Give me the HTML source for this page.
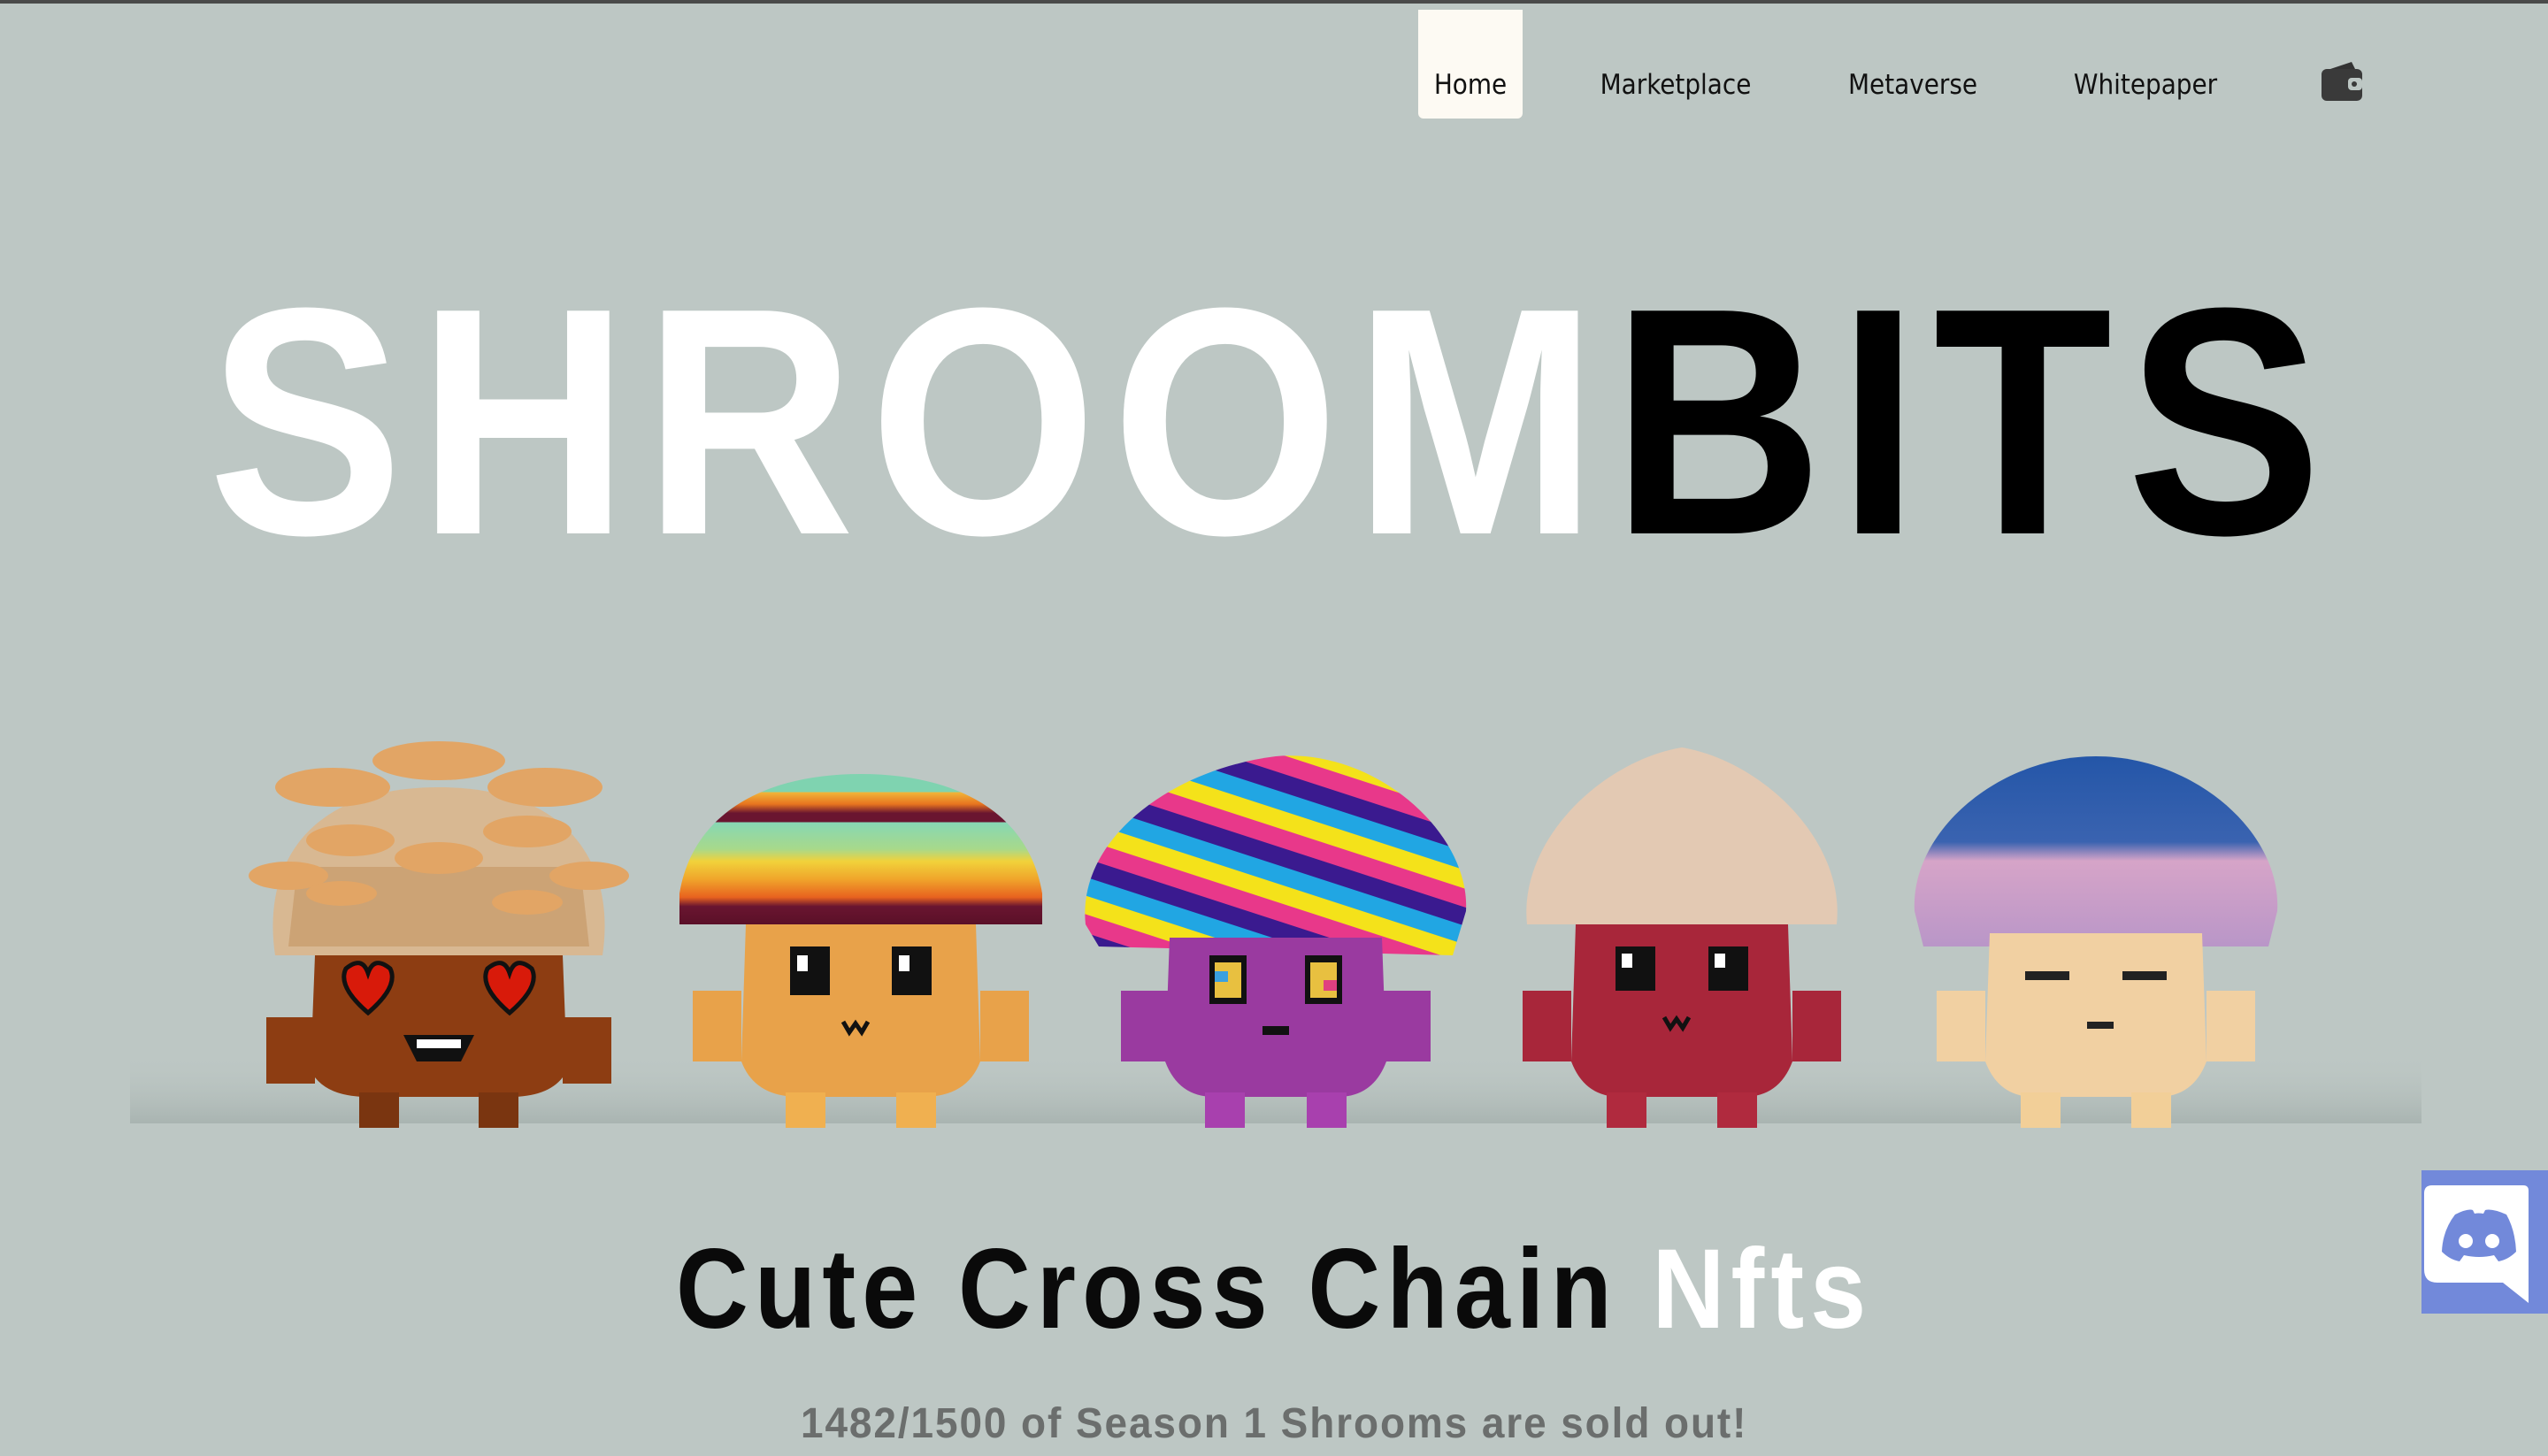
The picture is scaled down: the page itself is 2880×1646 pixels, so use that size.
<!DOCTYPE html>
<html><head><meta charset="utf-8">
<style>
html,body{margin:0;padding:0}
body{width:2880px;height:1646px;overflow:hidden;background:#bdc7c4;position:relative;font-family:"Liberation Sans",sans-serif}
.topbar{position:absolute;left:0;top:0;width:2880px;height:4px;background:#4a4a4a}
.nav{position:absolute;top:0;left:0;width:2880px;height:140px}
.nav a{position:absolute;top:78px;font-size:31px;color:#111;text-decoration:none;transform:translateX(-50%);white-space:nowrap;font-family:"DejaVu Sans Condensed","Liberation Sans Narrow","Liberation Sans",sans-serif}
.home{position:absolute;left:1603px;top:11px;width:118px;height:123px;background:#fdfaf3;border-radius:0 0 6px 6px}
.title{position:absolute;left:235px;top:294px;font-weight:bold;font-size:366px;line-height:366px;letter-spacing:18px;transform-origin:0 0;white-space:nowrap}
.sub{position:absolute;left:764px;top:1388px;font-weight:bold;font-size:128px;line-height:140px;letter-spacing:8px;white-space:nowrap;color:#0a0a0a;transform-origin:0 0}
.sold{position:absolute;left:905px;top:1580px;font-weight:bold;font-size:48px;line-height:60px;color:#6b6e6d;letter-spacing:2px;white-space:nowrap;transform-origin:0 0}
.discord{position:absolute;left:2737px;top:1323px;width:143px;height:162px;background:#7289da}
</style></head><body>
<div class="topbar"></div>
<div class="home"></div>
<div class="nav">
<a style="left:1662px">Home</a>
<a style="left:1894px">Marketplace</a>
<a style="left:2162px">Metaverse</a>
<a style="left:2425px">Whitepaper</a>
</div>
<svg style="position:absolute;left:2622px;top:68px" width="52" height="48" viewBox="0 0 52 48">
<path d="M6 12 L36 2 L40 10 Z" fill="#333"/>
<rect x="2" y="10" width="46" height="36" rx="6" fill="#3a3a3a"/>
<rect x="32" y="20" width="16" height="14" rx="4" fill="#bdc7c4"/>
<circle cx="39" cy="27" r="3" fill="#3a3a3a"/>
</svg>

<div class="title" id="t"><span style="color:#fff">SHROOM</span><span style="color:#000">BITS</span></div>

<svg style="position:absolute;left:0;top:780px" width="2880" height="520" viewBox="0 780 2880 520">
<defs>
<linearGradient id="shadow" x1="0" y1="0" x2="0" y2="1"><stop offset="0" stop-color="#bdc7c4" stop-opacity="0"/><stop offset="1" stop-color="#a9b4b1"/></linearGradient>
<linearGradient id="rain" x1="0" y1="0" x2="0" y2="1">
<stop offset="0" stop-color="#7fd3b0"/><stop offset=".12" stop-color="#7fd3b0"/><stop offset=".12" stop-color="#f1b73a"/><stop offset=".2" stop-color="#e8751f"/><stop offset=".26" stop-color="#6a1530"/><stop offset=".32" stop-color="#6a1530"/><stop offset=".32" stop-color="#86d7b5"/><stop offset=".5" stop-color="#a8d98a"/><stop offset=".58" stop-color="#f1d23b"/><stop offset=".7" stop-color="#f0a52b"/><stop offset=".82" stop-color="#e8621f"/><stop offset=".88" stop-color="#6a1530"/><stop offset="1" stop-color="#5a1028"/></linearGradient>
<pattern id="psyp" width="120" height="80" patternUnits="userSpaceOnUse" patternTransform="rotate(18)">
<rect width="120" height="20" fill="#f4e21a"/><rect y="20" width="120" height="20" fill="#e8388a"/><rect y="40" width="120" height="20" fill="#3a1a8f"/><rect y="60" width="120" height="20" fill="#21a6e3"/></pattern>
<linearGradient id="sky" x1="0" y1="0" x2="0" y2="1"><stop offset="0" stop-color="#2456a8"/><stop offset=".45" stop-color="#3a63b0"/><stop offset=".55" stop-color="#d6a4c8"/><stop offset="1" stop-color="#b996c8"/></linearGradient>
</defs>
<rect x="147" y="1190" width="2590" height="80" fill="url(#shadow)"/>

<g transform="translate(496,830)">
<path d="M-185,250 C-200,150 -150,60 0,60 C150,60 200,150 185,250 Z" fill="#d8b892"/>
<path d="M-170,240 L170,240 L160,150 L-160,150 Z" fill="#c89a6a" opacity=".7"/>
<g fill="#e2a565"><ellipse cx="-120" cy="60" rx="65" ry="22"/><ellipse cx="0" cy="30" rx="75" ry="22"/><ellipse cx="120" cy="60" rx="65" ry="22"/><ellipse cx="-100" cy="120" rx="50" ry="18"/><ellipse cx="100" cy="110" rx="50" ry="18"/><ellipse cx="-170" cy="160" rx="45" ry="16"/><ellipse cx="170" cy="160" rx="45" ry="16"/><ellipse cx="0" cy="140" rx="50" ry="18"/><ellipse cx="-110" cy="180" rx="40" ry="14"/><ellipse cx="100" cy="190" rx="40" ry="14"/></g>
<path d="M-140,250 L140,250 L145,380 Q130,410 80,410 L-80,410 Q-130,410 -145,380 Z" fill="#8d3d12"/>
<rect x="-195" y="320" width="55" height="75" fill="#8d3d12"/><rect x="140" y="320" width="55" height="75" fill="#8d3d12"/>
<rect x="-90" y="405" width="45" height="40" fill="#7a3510"/><rect x="45" y="405" width="45" height="40" fill="#7a3510"/>
<path d="M-105,265 q18,-15 25,5 q7,-20 25,-5 q10,20 -25,50 q-35,-30 -25,-50Z" fill="#d81a0a" stroke="#111" stroke-width="5"/>
<path d="M55,265 q18,-15 25,5 q7,-20 25,-5 q10,20 -25,50 q-35,-30 -25,-50Z" fill="#d81a0a" stroke="#111" stroke-width="5"/>
<path d="M-40,340 L40,340 L25,370 L-25,370 Z" fill="#111"/><rect x="-25" y="345" width="50" height="10" fill="#fff"/>
</g>

<g transform="translate(973,830)">
<path d="M-205,180 C-190,90 -110,45 0,45 C110,45 190,90 205,180 L205,215 L-205,215 Z" fill="url(#rain)"/>
<path d="M-130,215 L130,215 L135,370 Q120,410 70,410 L-70,410 Q-120,410 -135,370 Z" fill="#e8a24a"/>
<rect x="-190" y="290" width="55" height="80" fill="#e8a24a"/><rect x="135" y="290" width="55" height="80" fill="#e8a24a"/>
<rect x="-85" y="405" width="45" height="40" fill="#f0b050"/><rect x="40" y="405" width="45" height="40" fill="#f0b050"/>
<rect x="-80" y="240" width="45" height="55" fill="#111"/><rect x="35" y="240" width="45" height="55" fill="#111"/>
<rect x="-72" y="250" width="12" height="18" fill="#fff"/><rect x="43" y="250" width="12" height="18" fill="#fff"/>
<path d="M-20,325 l7,12 7,-10 7,10 7,-12" stroke="#111" stroke-width="5" fill="none"/>
</g>

<g transform="translate(1442,830)">
<path d="M-215,215 C-225,120 -120,40 0,25 C110,15 220,110 215,200 L200,250 L-200,240 Z" fill="url(#psyp)"/>
<path d="M-120,230 L120,230 L125,370 Q110,410 70,410 L-70,410 Q-110,410 -125,370 Z" fill="#9a3aa0"/>
<rect x="-175" y="290" width="55" height="80" fill="#9a3aa0"/><rect x="120" y="290" width="55" height="80" fill="#9a3aa0"/>
<rect x="-80" y="405" width="45" height="40" fill="#a840ae"/><rect x="35" y="405" width="45" height="40" fill="#a840ae"/>
<rect x="-75" y="250" width="42" height="55" fill="#111"/><rect x="33" y="250" width="42" height="55" fill="#111"/>
<rect x="-69" y="258" width="30" height="40" fill="#e8c040"/><rect x="39" y="258" width="30" height="40" fill="#e8c040"/>
<rect x="-69" y="268" width="15" height="12" fill="#3aa0e0"/><rect x="54" y="278" width="15" height="12" fill="#e04080"/>
<rect x="-15" y="330" width="30" height="10" fill="#111"/>
</g>

<g transform="translate(1901,830)">
<path d="M-175,215 C-185,120 -90,30 0,15 C90,30 185,120 175,215 Z" fill="#e3c9b3"/>
<path d="M-120,215 L120,215 L125,370 Q110,410 70,410 L-70,410 Q-110,410 -125,370 Z" fill="#a8263a"/>
<rect x="-180" y="290" width="55" height="80" fill="#a8263a"/><rect x="125" y="290" width="55" height="80" fill="#a8263a"/>
<rect x="-85" y="405" width="45" height="40" fill="#b02a3e"/><rect x="40" y="405" width="45" height="40" fill="#b02a3e"/>
<rect x="-75" y="240" width="45" height="50" fill="#111"/><rect x="30" y="240" width="45" height="50" fill="#111"/>
<rect x="-68" y="248" width="12" height="16" fill="#fff"/><rect x="37" y="248" width="12" height="16" fill="#fff"/>
<path d="M-20,320 l7,12 7,-10 7,10 7,-12" stroke="#111" stroke-width="5" fill="none"/>
</g>

<g transform="translate(2369,830)">
<path d="M-205,200 C-210,110 -110,25 0,25 C110,25 210,110 205,200 L195,240 L-195,240 Z" fill="url(#sky)"/>
<path d="M-120,225 L120,225 L125,370 Q110,410 70,410 L-70,410 Q-110,410 -125,370 Z" fill="#f1d0a2"/>
<rect x="-180" y="290" width="55" height="80" fill="#f1d0a2"/><rect x="125" y="290" width="55" height="80" fill="#f1d0a2"/>
<rect x="-85" y="405" width="45" height="40" fill="#f2cf98"/><rect x="40" y="405" width="45" height="40" fill="#f2cf98"/>
<rect x="-80" y="268" width="50" height="10" fill="#222"/><rect x="30" y="268" width="50" height="10" fill="#222"/>
<rect x="-10" y="325" width="30" height="8" fill="#222"/>
</g>
</svg>

<div class="sub" id="s">Cute Cross Chain <span style="color:#fff">Nfts</span></div>
<div class="sold" id="d">1482/1500 of Season 1 Shrooms are sold out!</div>

<div class="discord">
<svg width="143" height="162" viewBox="0 0 143 162">
<path d="M12 17 H115 Q121 17 121 23 V150 L92 127 H18 Q3 127 3 112 V26 Q3 17 12 17 Z" fill="#fff"/>
<path d="M38 50 Q52 43 58 45 L60 49 Q64 48 70 49 L72 45 Q80 43 96 50 Q106 68 107 92 Q98 101 87 103 L82 96 Q65 100 48 96 L43 103 Q32 101 23 92 Q24 68 38 50Z" fill="#7289da"/>
<circle cx="50" cy="80" r="8" fill="#fff"/><circle cx="80" cy="80" r="8" fill="#fff"/>
</svg>
</div>
<script>
function fit(id,w){var e=document.getElementById(id);var r=e.scrollWidth;e.style.transform='scaleX('+(w/r)+')';}
fit('t',2406);fit('s',1352);fit('d',1070);
</script>
</body></html>
